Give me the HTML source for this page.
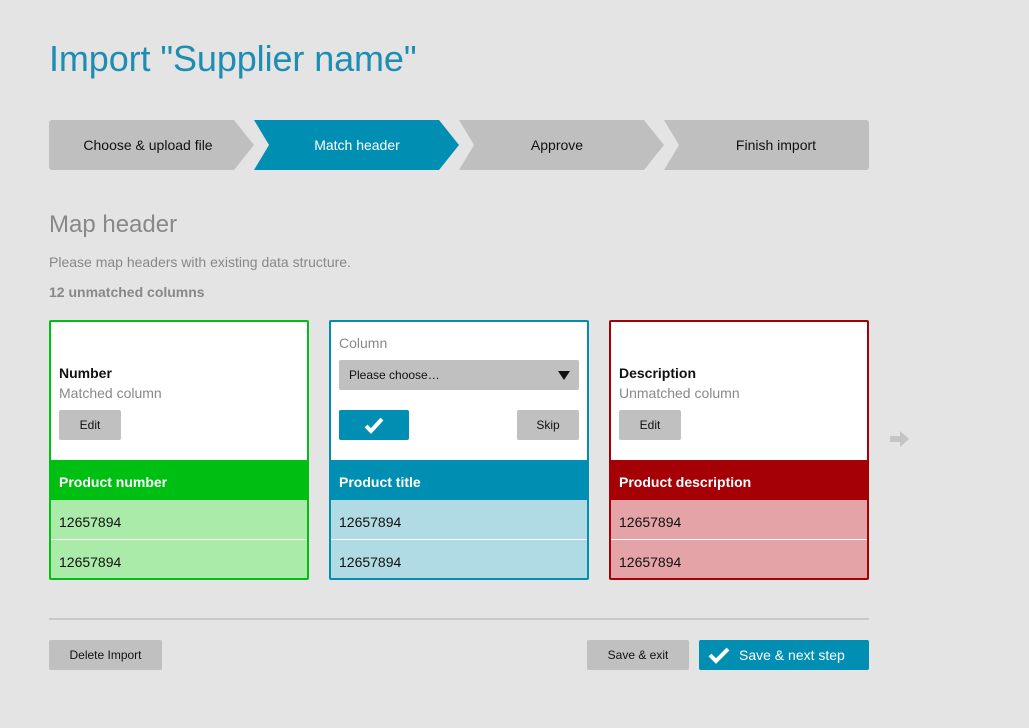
<!DOCTYPE html>
<html><head><style>
body{margin:0;width:1029px;height:728px;background:#e4e4e4;font-family:"Liberation Sans",sans-serif;position:relative;overflow:hidden}
.a{position:absolute}
h1{position:absolute;left:49px;top:38px;margin:0;font-weight:normal;font-size:36px;color:#1e8db2;letter-spacing:-0.1px}
.card{position:absolute;top:320px;width:256px;height:256px;border:2px solid;background:#fff;border-radius:2px;overflow:hidden}
.btn{position:absolute;background:#c0c0c0;border-radius:2px;font-size:12px;text-align:center;color:#111}
.band{position:absolute;left:0;right:0;top:138px;height:40px;line-height:44px;color:#fff;font-weight:bold;font-size:14px;padding-left:8px}
.row{position:absolute;left:0;right:0;height:39px;line-height:44px;font-size:14px;padding-left:8px;color:#111}
.t{position:absolute;left:8px;font-size:14px}
</style></head><body>
<h1>Import "Supplier name"</h1>
<svg class="a" style="left:0;top:0" width="1029" height="200">
<polygon points="51,120 234,120 254,145 234,170 51,170 49,168 49,122" fill="#bfbfbf"/>
<polygon points="254,120 439,120 459,145 439,170 254,170 269,145" fill="#008fb2"/>
<polygon points="459,120 644,120 664,145 644,170 459,170 474,145" fill="#bfbfbf"/>
<polygon points="664,120 867,120 869,122 869,168 867,170 664,170 679,145" fill="#bfbfbf"/>
<g font-size="14" text-anchor="middle" font-family="Liberation Sans">
<text x="148" y="150" fill="#111">Choose &amp; upload file</text>
<text x="357" y="150" fill="#fff">Match header</text>
<text x="557" y="150" fill="#111">Approve</text>
<text x="776" y="150" fill="#111">Finish import</text>
</g>
</svg>
<div class="a" style="left:49px;top:211px;font-size:24px;color:#888">Map header</div>
<div class="a" style="left:49px;top:254px;font-size:14px;color:#888">Please map headers with existing data structure.</div>
<div class="a" style="left:49px;top:284px;font-size:14px;color:#888;font-weight:bold">12 unmatched columns</div>

<div class="card" style="left:49px;border-color:#00bf13">
<div class="t" style="top:43px;font-weight:bold;color:#111">Number</div>
<div class="t" style="top:63px;color:#888">Matched column</div>
<div class="btn" style="left:8px;top:88px;width:62px;height:30px;line-height:30px">Edit</div>
<div class="band" style="background:#00bf13">Product number</div>
<div class="row" style="top:178px;background:#abeba9;border-bottom:1px solid #fff">12657894</div>
<div class="row" style="top:218px;background:#abeba9">12657894</div>
</div>

<div class="card" style="left:329px;border-color:#008fb2">
<div class="t" style="top:13px;color:#888">Column</div>
<div class="btn" style="left:8px;top:38px;width:240px;height:30px;line-height:30px;text-align:left;padding-left:10px;box-sizing:border-box">Please choose…<svg style="position:absolute;right:9px;top:11px" width="12" height="9"><polygon points="0,0 12,0 6,9" fill="#111"/></svg></div>
<div class="btn" style="left:8px;top:88px;width:70px;height:30px;background:#008fb2"><svg style="margin-top:6px" width="20" height="18" viewBox="0 0 20 18"><path d="M2 10 L7 15 L18 3" stroke="#fff" stroke-width="4" fill="none"/></svg></div>
<div class="btn" style="left:186px;top:88px;width:62px;height:30px;line-height:30px">Skip</div>
<div class="band" style="background:#008fb2">Product title</div>
<div class="row" style="top:178px;background:#b0dbe5;border-bottom:1px solid #fff">12657894</div>
<div class="row" style="top:218px;background:#b0dbe5">12657894</div>
</div>

<div class="card" style="left:609px;border-color:#a50005">
<div class="t" style="top:43px;font-weight:bold;color:#111">Description</div>
<div class="t" style="top:63px;color:#888">Unmatched column</div>
<div class="btn" style="left:8px;top:88px;width:62px;height:30px;line-height:30px">Edit</div>
<div class="band" style="background:#a50005">Product description</div>
<div class="row" style="top:178px;background:#e4a3a6;border-bottom:1px solid #fff">12657894</div>
<div class="row" style="top:218px;background:#e4a3a6">12657894</div>
</div>

<svg class="a" style="left:890px;top:431px" width="20" height="16"><path d="M0 5 H10 V0 L19 8 L10 16 V11 H0 Z" fill="#c4c4c4"/></svg>

<div class="a" style="left:49px;top:618px;width:820px;height:2px;background:#c8c8c8"></div>
<div class="btn" style="left:49px;top:640px;width:113px;height:30px;line-height:30px">Delete Import</div>
<div class="btn" style="left:587px;top:640px;width:102px;height:30px;line-height:30px">Save &amp; exit</div>
<div class="btn" style="left:699px;top:640px;width:170px;height:30px;line-height:30px;background:#008fb2;color:#fff;font-size:14px;text-align:left"><svg style="position:absolute;left:9px;top:6px" width="22" height="18" viewBox="0 0 22 18"><path d="M2 9 L8 15 L20 3" stroke="#fff" stroke-width="4" fill="none"/></svg><span style="position:absolute;left:40px">Save &amp; next step</span></div>
</body></html>
